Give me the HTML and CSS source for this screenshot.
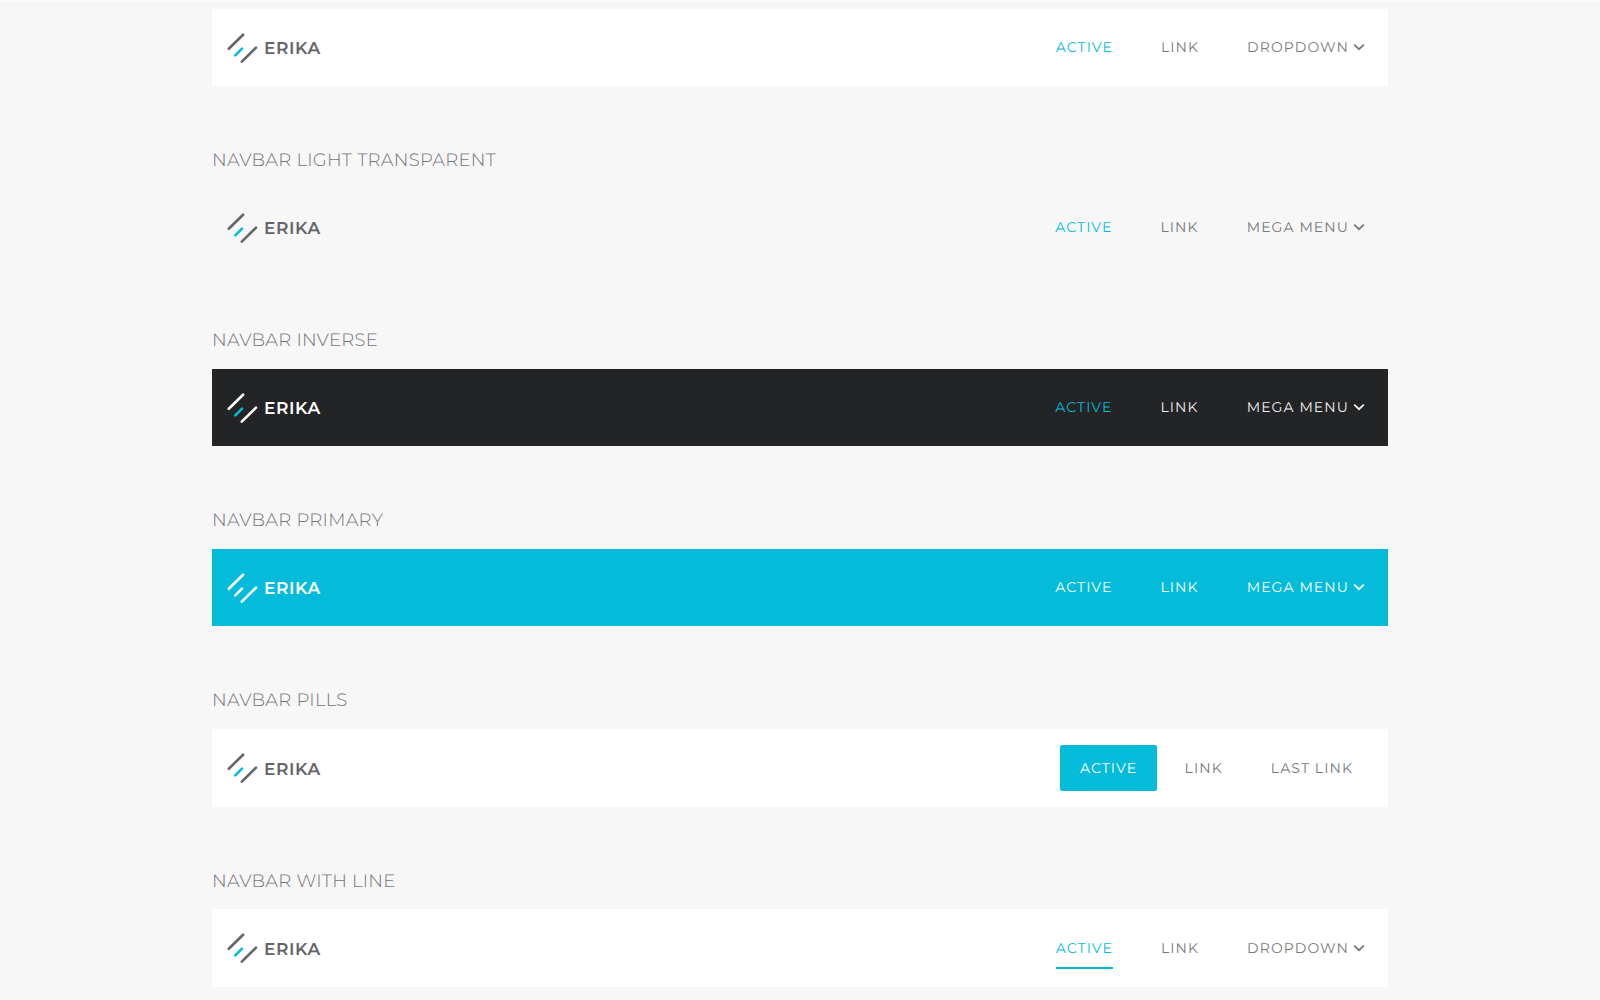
FILE: index.html
```html
<!DOCTYPE html>
<html lang="en"><head><meta charset="utf-8"><title>Navbars</title><link rel="stylesheet" href="styles.css"></head>
<body>
<svg width="0" height="0" class="defs"><defs>
<symbol id="logo" viewBox="0 0 32 32"><path d="M2.800 16.800 17.100 2.700M15.800 29.700 30 15.600"/><path class="accent" d="M9.300 23.300 16 16.600"/></symbol>
<symbol id="chev" viewBox="0 0 12 8"><path d="M1.200 1.600 6 6.200l4.800-4.600"/></symbol>
</defs></svg>
<main class="page">
<nav class="bar"><a class="brand"><svg class="logo"><use href="#logo"/></svg><span>ERIKA</span></a><div class="links"><a class="on">ACTIVE</a><a>LINK</a><a class="drop"><span>DROPDOWN</span><svg class="chev"><use href="#chev"/></svg></a></div></nav>
<h2>NAVBAR LIGHT TRANSPARENT</h2>
<nav class="bar clear"><a class="brand"><svg class="logo"><use href="#logo"/></svg><span>ERIKA</span></a><div class="links"><a class="on">ACTIVE</a><a>LINK</a><a class="drop"><span>MEGA MENU</span><svg class="chev"><use href="#chev"/></svg></a></div></nav>
<h2>NAVBAR INVERSE</h2>
<nav class="bar inverse"><a class="brand"><svg class="logo"><use href="#logo"/></svg><span>ERIKA</span></a><div class="links"><a class="on">ACTIVE</a><a>LINK</a><a class="drop"><span>MEGA MENU</span><svg class="chev"><use href="#chev"/></svg></a></div></nav>
<h2>NAVBAR PRIMARY</h2>
<nav class="bar primary"><a class="brand"><svg class="logo"><use href="#logo"/></svg><span>ERIKA</span></a><div class="links"><a class="on">ACTIVE</a><a>LINK</a><a class="drop"><span>MEGA MENU</span><svg class="chev"><use href="#chev"/></svg></a></div></nav>
<h2>NAVBAR PILLS</h2>
<nav class="bar pills"><a class="brand"><svg class="logo"><use href="#logo"/></svg><span>ERIKA</span></a><div class="links"><a class="on">ACTIVE</a><a>LINK</a><a>LAST LINK</a></div></nav>
<h2 class="short">NAVBAR WITH LINE</h2>
<nav class="bar line"><a class="brand"><svg class="logo"><use href="#logo"/></svg><span>ERIKA</span></a><div class="links"><a class="on">ACTIVE</a><a>LINK</a><a class="drop"><span>DROPDOWN</span><svg class="chev"><use href="#chev"/></svg></a></div></nav>
</main>
</body></html>
```
FILE: styles.css
```css
* { box-sizing: border-box; }
body {
  margin: 0;
  height: 1000px;
  overflow: hidden;
  background: #f7f7f7;
  border-top: 1px solid #fcfcfc;
  font-family: Montserrat, Inter, "Open Sans", sans-serif;
  text-rendering: geometricPrecision;
  color: #77787a;
}
.defs { display: block; }
.page { width: 1176px; margin: 8px auto 0; }

h2 {
  margin: 0;
  height: 103px;
  padding-top: 62px;
  font-size: 18px;
  line-height: 24px;
  font-weight: 300;
  letter-spacing: 0.27px;
  white-space: nowrap;
  color: #747577;
}
h2.short { height: 102px; }

.bar {
  height: 77px;
  padding: 0 23px 0 14px;
  display: flex;
  align-items: center;
  justify-content: space-between;
  background: #fff;
}
.brand { display: flex; align-items: center; gap: 6px; color: #646568; }
.brand span { font-size: 17px; line-height: 20px; font-weight: 600; letter-spacing: 0.6px; padding-top: 3px; }
.logo { width: 32px; height: 32px; fill: none; stroke: currentColor; stroke-width: 2.6; stroke-linecap: round; }
.accent { stroke: var(--accent, #04bcda); }

.links {
  display: flex;
  align-items: center;
  gap: 48px;
  padding-bottom: 1px;
  font-size: 14px;
  line-height: 20px;
  letter-spacing: 1.1px;
  white-space: nowrap;
}
.on { color: #04bcda; }
.drop { display: flex; align-items: center; gap: 4px; }
.chev { width: 12px; height: 8px; fill: none; stroke: currentColor; stroke-width: 1.8; }

.clear { background: transparent; }
.inverse { background: #232426; color: #f0f0f0; }
.inverse .brand, .primary .brand { color: #fff; }
.primary { --accent: #fff; background: #04bcda; color: #fff; }
.primary .on { color: #fff; }

.pills { height: 78px; padding-right: 15px; }
.pills .links { gap: 8px; padding-bottom: 0; }
.pills .links a { padding: 13px 20px; border-radius: 2px; }
.pills .links .on { padding: 13px 19.5px; background: #04bcda; color: #fff; }

.line { height: 78px; }
.line .links { padding-bottom: 0; }
.line .on { padding: 11px 0 9px; border-bottom: 2px solid #04bcda; }
```
